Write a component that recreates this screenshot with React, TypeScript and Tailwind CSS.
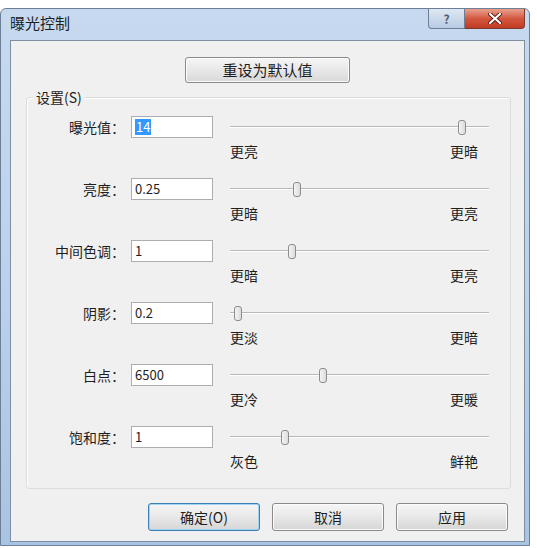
import React from 'react';

const ROWS = [
  { label: '曝光值：', value: '14', pos: 232, left: '更亮', right: '更暗', selected: true },
  { label: '亮度：', value: '0.25', pos: 67, left: '更暗', right: '更亮' },
  { label: '中间色调：', value: '1', pos: 62, left: '更暗', right: '更亮' },
  { label: '阴影：', value: '0.2', pos: 8, left: '更淡', right: '更暗' },
  { label: '白点：', value: '6500', pos: 93, left: '更冷', right: '更暖' },
  { label: '饱和度：', value: '1', pos: 55, left: '灰色', right: '鲜艳' },
];

const FONT = "font-['Noto_Sans_CJK_SC','Noto_Sans',sans-serif]";

function Slider({ pos }: { pos: number }) {
  return (
    <div className="relative h-[22px] w-[259px]">
      <div className="absolute left-0 right-0 top-[10px] h-[2px] border-t border-[#b8b8b8] border-b border-b-white" />
      <div
        className="absolute top-[4px] h-[15px] w-[8px] -translate-x-1/2 rounded-[3px] border border-[#8c8c8c] bg-gradient-to-r from-[#f4f4f4] to-[#dcdcdc]"
        style={{ left: pos }}
      />
    </div>
  );
}

function Row({ row }: { row: (typeof ROWS)[number] }) {
  return (
    <div className="grid h-[62px] grid-cols-[98px_82px_259px] gap-x-[6px]">
      <div className="flex h-[22px] items-center justify-end text-[14px] text-[#1e1e1e]">{row.label}</div>
      <div className="flex h-[22px] items-center border border-[#abadb3] bg-white px-[3px] text-[13px] text-[#1e1e1e]">
        {row.selected ? (
          <span className="bg-[#3399ff] px-[1px] leading-[16px] text-white">{row.value}</span>
        ) : (
          <span className="leading-[16px]">{row.value}</span>
        )}
      </div>
      <div className="ml-[11px] flex flex-col">
        <Slider pos={row.pos} />
        <div className="mt-[4px] flex justify-between text-[14px] leading-[18px] text-[#1e1e1e]">
          <span>{row.left}</span>
          <span>{row.right}</span>
        </div>
      </div>
    </div>
  );
}

function DlgButton({ children, focused }: { children: React.ReactNode; focused?: boolean }) {
  return (
    <button
      className={
        'flex h-[28px] w-[112px] items-center justify-center rounded-[3px] border bg-gradient-to-b from-[#f6f6f6] via-[#e8e8e8] to-[#d6d6d6] text-[14px] text-[#1e1e1e] ' +
        (focused ? 'border-[#3c7fb1] shadow-[inset_0_0_0_1px_#9fd4f5]' : 'border-[#8a8a8a] shadow-[inset_0_0_0_1px_#fcfcfc]')
      }
    >
      {children}
    </button>
  );
}

export default function App() {
  return (
    <div className={`h-[548px] w-[537px] overflow-hidden bg-white ${FONT}`}>
      <div className="mt-[8px] h-[538px] w-[530px] rounded-t-[6px] border border-[#6d7f95] bg-gradient-to-b from-[#c6d9ef] via-[#bcd2ec] to-[#a9c3e2]">
        <div className="flex h-[31px] items-start justify-between pl-[9px]">
          <div className="mt-[3px] text-[15px] text-[#1e1e1e]">曝光控制</div>
          <div className="mr-[4px] flex">
            <div className="flex h-[20px] w-[37px] items-center justify-center rounded-bl-[4px] border border-t-0 border-[#6d7f95] bg-gradient-to-b from-[#dfe8f3] to-[#b8cbe2] text-[12px] font-bold text-[#4d5d74]">
              ?
            </div>
            <div className="flex h-[20px] w-[60px] items-center justify-center rounded-br-[4px] border border-l-0 border-t-0 border-[#7a3a30] bg-gradient-to-b from-[#e8a08f] via-[#d3573f] to-[#c23a22]">
              <svg width="14" height="11" viewBox="0 0 14 11">
                <path d="M2 1 L12 10 M12 1 L2 10" stroke="#5a1a10" strokeWidth="4" strokeLinecap="round" />
                <path d="M2 1 L12 10 M12 1 L2 10" stroke="white" strokeWidth="2.2" strokeLinecap="round" />
              </svg>
            </div>
          </div>
        </div>
        <div className="ml-[9px] h-[502px] w-[515px] border border-[#7e8ea3] bg-[#f0f0f0]">
          <div className="flex justify-center pt-[16px]">
            <button className="flex h-[26px] w-[165px] items-center justify-center rounded-[3px] border border-[#8a8a8a] bg-gradient-to-b from-[#f6f6f6] via-[#e8e8e8] to-[#d8d8d8] text-[15px] text-[#1e1e1e] shadow-[inset_0_0_0_1px_#fcfcfc]">
              重设为默认值
            </button>
          </div>
          <div className="relative ml-[15px] mt-[14px] h-[392px] w-[485px] rounded-[3px] border border-[#dcdcdc] shadow-[inset_1px_1px_0_#ffffff]">
            <div className="absolute -top-[10px] left-[6px] bg-[#f0f0f0] px-[3px] text-[14px] leading-[18px] text-[#1e1e1e]">
              设置(S)
            </div>
            <div className="pt-[18px]">
              {ROWS.map((r) => (
                <Row key={r.label} row={r} />
              ))}
            </div>
          </div>
          <div className="mt-[14px] flex justify-end gap-[12px] pr-[16px]">
            <DlgButton focused>确定(O)</DlgButton>
            <DlgButton>取消</DlgButton>
            <DlgButton>应用</DlgButton>
          </div>
        </div>
      </div>
    </div>
  );
}
